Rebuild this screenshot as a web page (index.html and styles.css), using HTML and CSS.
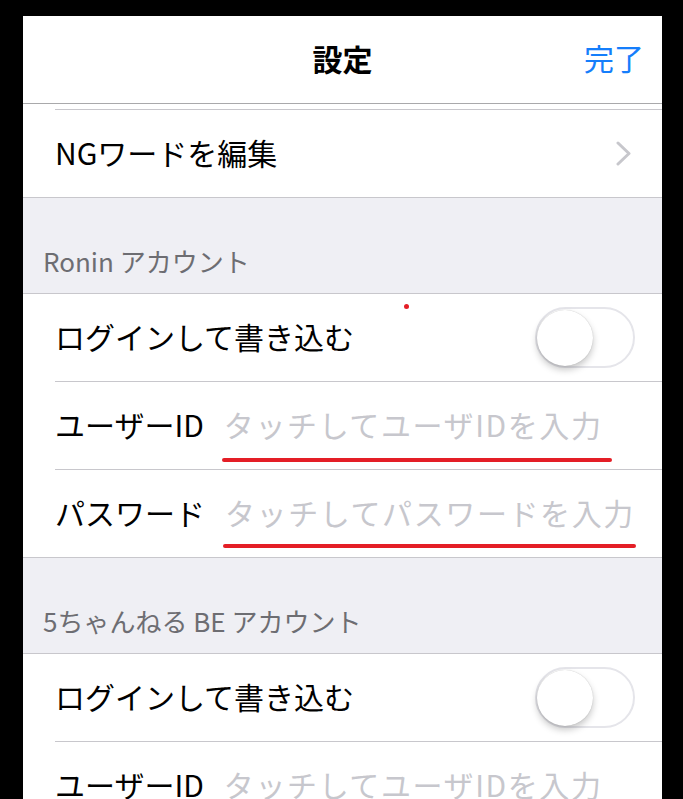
FILE: index.html
```html
<!DOCTYPE html>
<html lang="ja">
<head>
    <meta charset="UTF-8">
    <meta name="viewport" content="width=device-width, initial-scale=1.0">
    <title>設定</title>
    <link rel="stylesheet" href="styles.css">
</head>
<body>
    <div class="screen">
        <header class="nav">
            <span class="nav-title">設定</span>
            <span class="nav-done">完了</span>
        </header>

        <div class="table">
            <!-- row scrolled up under the nav bar -->
            <ul class="group group-top">
                <li class="cell cell-cut"><div class="cell-body"></div></li>
            </ul>
            <ul class="group group-bottom">
                <li class="cell">
                    <div class="cell-body">
                        <span class="cell-label">NGワードを編集</span>
                        <svg class="chevron" width="15" height="25" viewBox="0 0 15 25">
                            <polyline points="2,2 13,12.5 2,23" fill="none" stroke="#c7c7cc" stroke-width="3" stroke-linecap="round" stroke-linejoin="round"/>
                        </svg>
                    </div>
                </li>
            </ul>

            <div class="section-header">Ronin アカウント</div>
            <ul class="group">
                <li class="cell">
                    <span class="mark-dot"></span>
                    <div class="cell-body">
                        <span class="cell-label">ログインして書き込む</span>
                        <span class="switch"><span class="switch-knob"></span></span>
                    </div>
                </li>
                <li class="cell">
                    <div class="cell-body">
                        <span class="cell-label field-label">ユーザーID</span>
                        <span class="placeholder marked marked-long">タッチしてユーザIDを入力</span>
                    </div>
                </li>
                <li class="cell">
                    <div class="cell-body">
                        <span class="cell-label field-label">パスワード</span>
                        <span class="placeholder marked">タッチしてパスワードを入力</span>
                    </div>
                </li>
            </ul>

            <div class="section-header">5ちゃんねる BE アカウント</div>
            <ul class="group">
                <li class="cell">
                    <div class="cell-body">
                        <span class="cell-label">ログインして書き込む</span>
                        <span class="switch"><span class="switch-knob"></span></span>
                    </div>
                </li>
                <li class="cell">
                    <div class="cell-body">
                        <span class="cell-label field-label">ユーザーID</span>
                        <span class="placeholder">タッチしてユーザIDを入力</span>
                    </div>
                </li>
            </ul>
        </div>
    </div>
</body>
</html>
```

FILE: styles.css
```css
html, body {
    margin: 0;
    padding: 0;
    height: 100%;
}
body {
    background: #000;
    overflow: hidden;
    font-family: "Noto Sans CJK JP", "Noto Sans", sans-serif;
    color: #000;
}
.screen {
    margin: 16px 0 0 23px;
    width: 639px;
    height: calc(100vh - 16px);
    background: #fff;
    overflow: hidden;
}

/* nav bar */
.nav {
    height: 88px;
    box-sizing: border-box;
    padding-bottom: 4px;
    border-bottom: 1px solid #a9a9ab;
    display: flex;
    align-items: center;
    justify-content: center;
    position: relative;
}
.nav-title {
    font-size: 30px;
    font-weight: 700;
}
.nav-done {
    position: absolute;
    right: 18px;
    top: 50%;
    transform: translateY(-56%);
    font-size: 30px;
    color: #157efb;
}

/* table */
.group {
    list-style: none;
    margin: 0;
    padding: 0;
    background: #fff;
    border-top: 1px solid #c8c7cc;
    border-bottom: 1px solid #c8c7cc;
}
.group-top {
    border-top: none;
    border-bottom: none;
}
.group-bottom {
    border-top: none;
}
.cell {
    position: relative;
    padding-left: 32px;
}
.cell-body {
    height: 88px;
    box-sizing: border-box;
    display: flex;
    align-items: center;
    padding: 0 27px 4px 0;
    border-bottom: 1px solid #c8c7cc;
}
.cell:last-child .cell-body {
    height: 87px;
    border-bottom: none;
}
.group-top .cell:last-child .cell-body {
    height: 6px;
    padding: 0;
    border-bottom: 1px solid #c8c7cc;
}
.cell-label {
    font-size: 30px;
    line-height: 36px;
    white-space: nowrap;
}
.field-label {
    margin-right: 20px;
}
.placeholder {
    position: relative;
    font-size: 30px;
    line-height: 36px;
    letter-spacing: 1.6px;
    color: #c7c7cd;
    white-space: nowrap;
}
.chevron {
    margin: 4px 4px 0 auto;
}

/* red hand-drawn underline under the fields */
.marked::after {
    content: "";
    position: absolute;
    left: -2px;
    right: -1px;
    bottom: -18px;
    height: 4px;
    border-radius: 2px;
    background: #e41e26;
}
.marked-long::after {
    right: -9px;
    bottom: -20px;
}
.mark-dot {
    position: absolute;
    left: 381px;
    top: 10px;
    width: 5px;
    height: 5px;
    border-radius: 50%;
    background: #e41e26;
}

/* switch (off) */
.switch {
    margin: 4px 0 0 auto;
    position: relative;
    box-sizing: border-box;
    width: 100px;
    height: 61px;
    border: 2px solid #e5e5ea;
    border-radius: 31px;
    background: #fff;
}
.switch-knob {
    position: absolute;
    top: 1px;
    left: 0;
    width: 56px;
    height: 56px;
    border-radius: 50%;
    background: #fff;
    box-shadow: 0 4px 7px rgba(0, 0, 0, 0.22), 0 0 1px rgba(0, 0, 0, 0.25);
}

/* section headers */
.section-header {
    height: 95px;
    box-sizing: border-box;
    background: #efeff4;
    display: flex;
    align-items: flex-end;
    padding: 0 0 14px 20px;
    font-size: 26px;
    line-height: 36px;
    color: #6d6d72;
}
```
